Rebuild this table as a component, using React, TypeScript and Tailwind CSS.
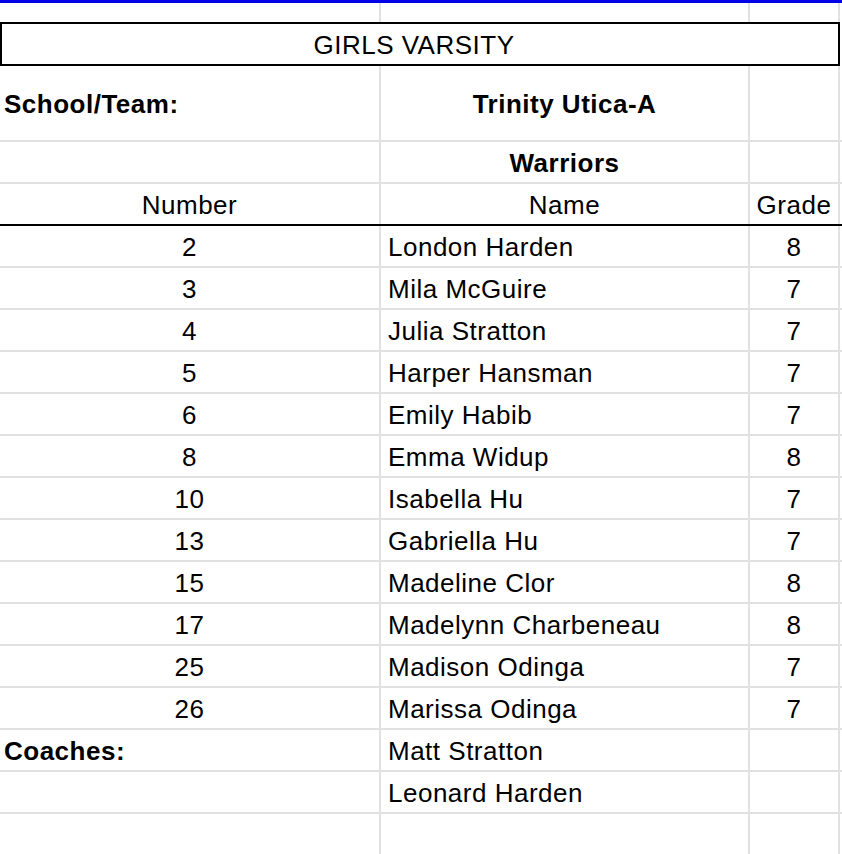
import React from 'react';

// Roster data for the sheet
const players = [
  { number: '2', name: 'London Harden', grade: '8' },
  { number: '3', name: 'Mila McGuire', grade: '7' },
  { number: '4', name: 'Julia Stratton', grade: '7' },
  { number: '5', name: 'Harper Hansman', grade: '7' },
  { number: '6', name: 'Emily Habib', grade: '7' },
  { number: '8', name: 'Emma Widup', grade: '8' },
  { number: '10', name: 'Isabella Hu', grade: '7' },
  { number: '13', name: 'Gabriella Hu', grade: '7' },
  { number: '15', name: 'Madeline Clor', grade: '8' },
  { number: '17', name: 'Madelynn Charbeneau', grade: '8' },
  { number: '25', name: 'Madison Odinga', grade: '7' },
  { number: '26', name: 'Marissa Odinga', grade: '7' },
];

type RowProps = {
  a?: React.ReactNode;
  b?: React.ReactNode;
  c?: React.ReactNode;
  h?: string;
  aClass?: string;
  bClass?: string;
  cClass?: string;
  bottom?: string;
};

function Row({ a, b, c, h = 'h-[42px]', aClass = '', bClass = '', cClass = '', bottom = 'border-[#e1e1e1]' }: RowProps) {
  return (
    <div className={`flex ${h} border-b-2 ${bottom}`}>
      <div className={`w-[381px] shrink-0 border-r-2 border-[#e1e1e1] flex items-center pt-[2px] ${aClass}`}>{a}</div>
      <div className={`w-[369px] shrink-0 border-r-2 border-[#e1e1e1] flex items-center pt-[2px] ${bClass}`}>{b}</div>
      <div className={`w-[90px] shrink-0 border-r-2 border-[#e1e1e1] flex items-center justify-center pt-[2px] ${cClass}`}>{c}</div>
      <div className="flex-1" />
    </div>
  );
}

export default function App() {
  return (
    <div className="w-[842px] h-[854px] overflow-hidden bg-white text-black text-[26px] leading-none tracking-[0.5px] font-['Liberation_Sans',Arial,sans-serif]">
      <div className="h-[3px] bg-[#0000e6]" />

      {/* empty first row */}
      <div className="flex h-[19px]">
        <div className="w-[381px] shrink-0 border-r-2 border-[#e1e1e1]" />
        <div className="w-[369px] shrink-0 border-r-2 border-[#e1e1e1]" />
        <div className="w-[90px] shrink-0 border-r-2 border-[#e1e1e1]" />
      </div>

      {/* title box */}
      <div className="w-[840px] h-[44px] border-2 border-black flex items-center justify-center pr-[12px] pt-[1px]">
        GIRLS VARSITY
      </div>

      <Row
        h="h-[76px]"
        a={<span className="font-bold pl-[4px]">School/Team:</span>}
        b={<span className="font-bold">Trinity Utica-A</span>}
        bClass="justify-center"
      />
      <Row b={<span className="font-bold">Warriors</span>} bClass="justify-center" />
      <Row
        a="Number"
        b="Name"
        c="Grade"
        aClass="justify-center"
        bClass="justify-center"
        bottom="border-black"
      />

      {players.map((p) => (
        <Row
          key={p.number}
          a={p.number}
          b={<span className="pl-[7px]">{p.name}</span>}
          c={p.grade}
          aClass="justify-center"
        />
      ))}

      <Row
        a={<span className="font-bold pl-[4px]">Coaches:</span>}
        b={<span className="pl-[7px]">Matt Stratton</span>}
      />
      <Row b={<span className="pl-[7px]">Leonard Harden</span>} />
      <Row h="h-[42px]" />
    </div>
  );
}
